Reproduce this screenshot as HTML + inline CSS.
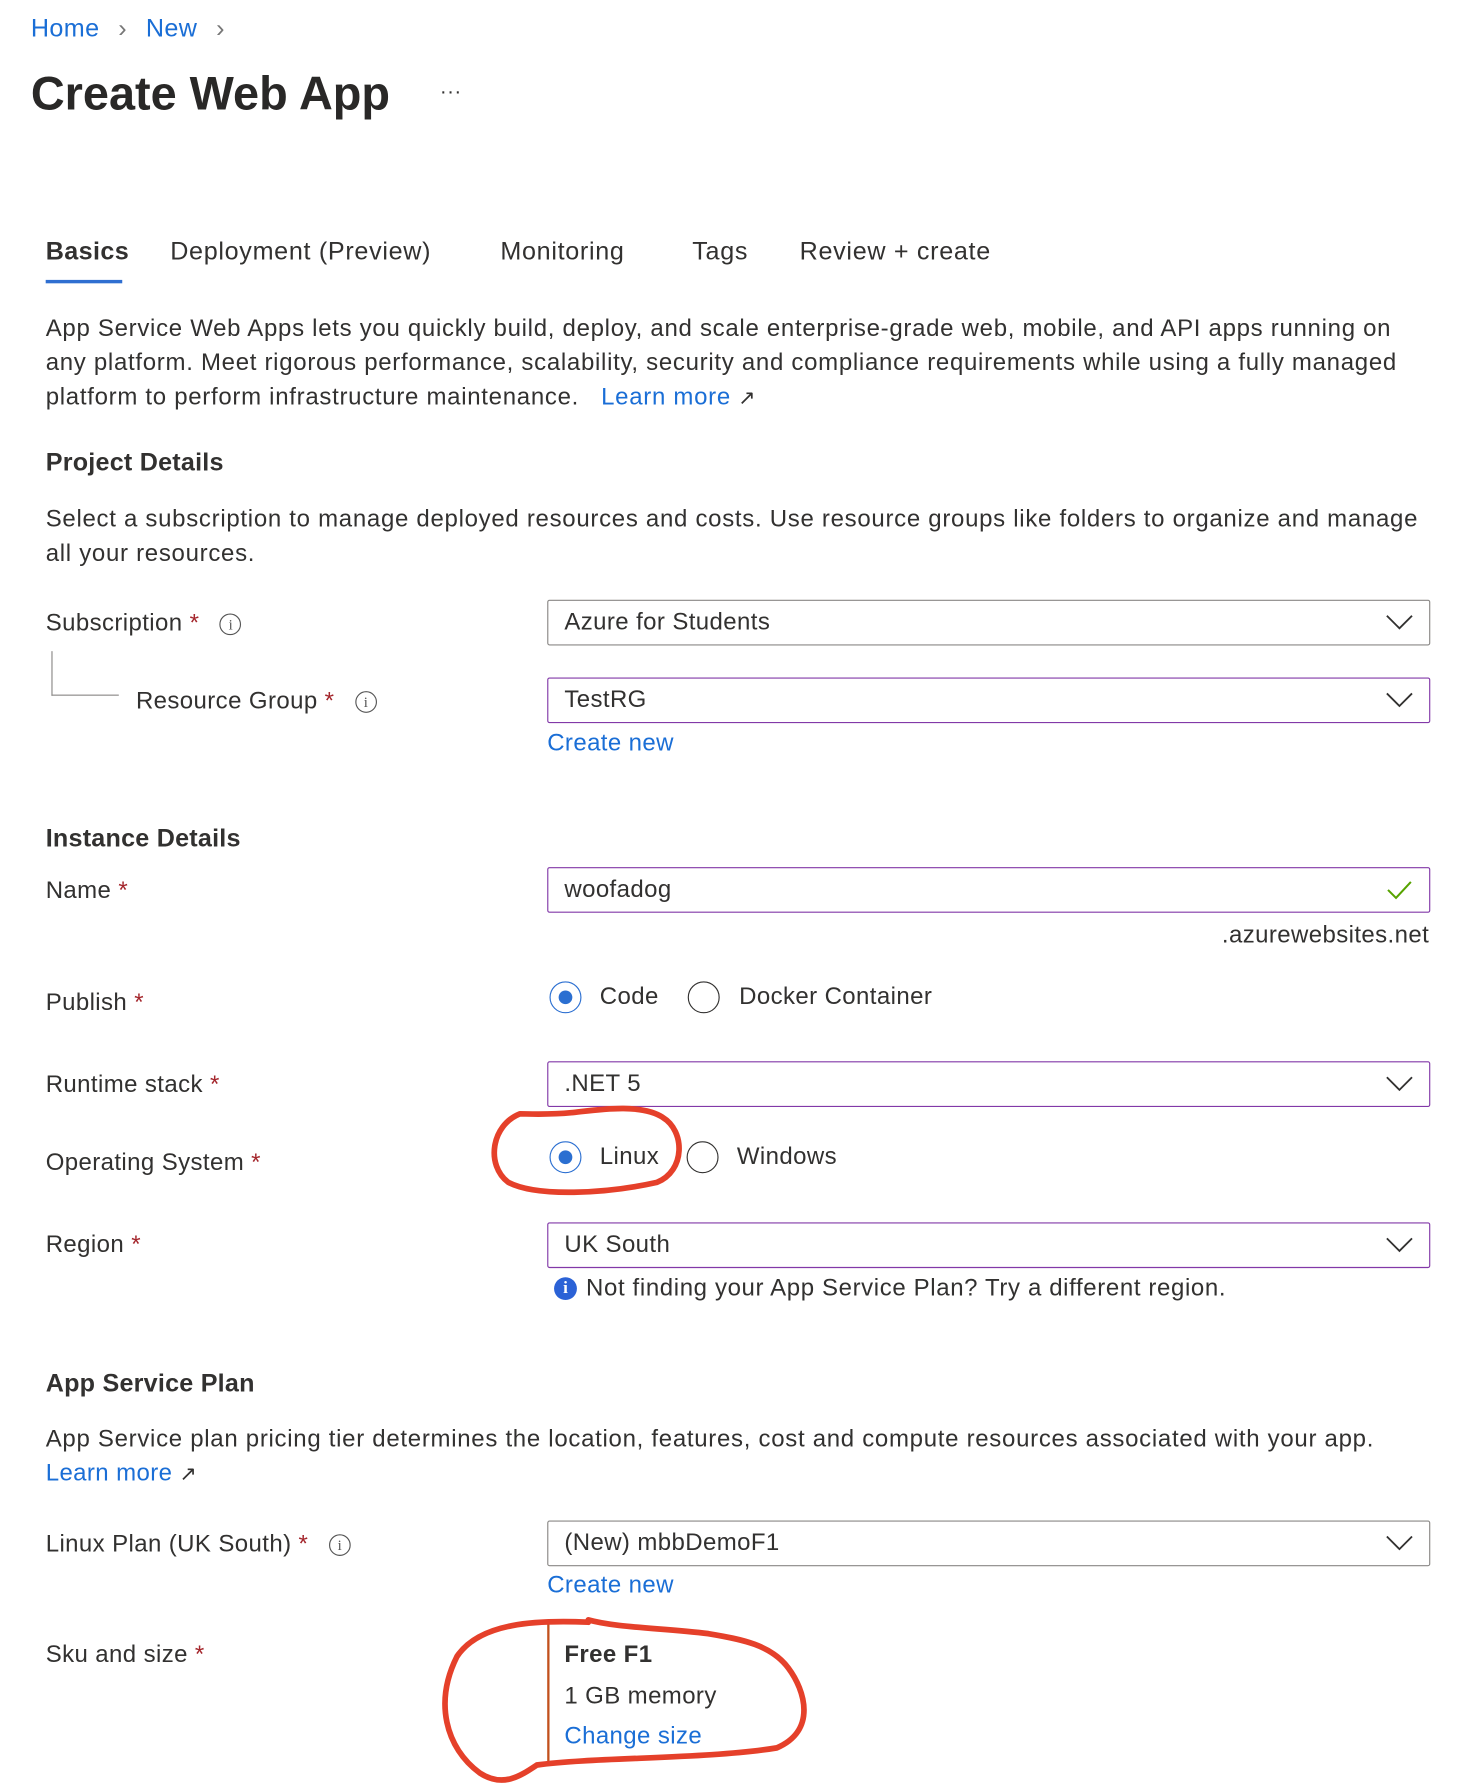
<!DOCTYPE html>
<html><head><meta charset="utf-8"><style>
html,body{margin:0;padding:0;background:#fff;}
body{width:1472px;height:1790px;overflow:hidden;position:relative;}
#w{position:absolute;left:0;top:0;width:1289px;height:1567px;transform:scale(1.1424);transform-origin:0 0;font-family:"Liberation Sans",sans-serif;color:#323130;}
.t{position:absolute;white-space:nowrap;font-size:21px;line-height:30px;transform:translateY(-15px);letter-spacing:0.35px;}
.b{font-weight:bold;font-size:22px;letter-spacing:0.2px;}
.l{color:#1a6ed6;}
.s{color:#a4262c;}
.box{position:absolute;left:479px;width:771px;height:38px;border:1px solid #8a8886;border-radius:2px;box-sizing:content-box;}
.p{border-color:#8239a8;border-width:1.5px;}
.box span{position:absolute;left:14px;top:4px;font-size:21px;line-height:30px;letter-spacing:0.35px;}
.box svg{position:absolute;right:14px;top:12px;}
.r{position:absolute;width:28px;height:28px;border:1.5px solid #323130;border-radius:50%;box-sizing:border-box;transform:translate(-14px,-14px);}
.r.on{border-color:#2b6fd1;}
.r.on::after{content:"";position:absolute;left:6.5px;top:6.5px;width:12px;height:12px;border-radius:50%;background:#2b6fd1;}
.info{display:inline-block;width:17px;height:17px;border:1.2px solid #555;border-radius:50%;font-size:13px;line-height:17px;text-align:center;font-family:"Liberation Serif",serif;vertical-align:middle;margin-left:18px;color:#555;letter-spacing:0;}
.p1{letter-spacing:0.62px;}
</style></head><body><div id="w">
<div class="t l" style="left:27px;top:25px;font-size:22px">Home <span style="color:#777;margin:0 10px">&#x203A;</span> New <span style="color:#777;margin-left:10px">&#x203A;</span></div>
<div class="t" style="left:27px;top:82px;font-size:41px;font-weight:bold;line-height:30px;color:#292827;letter-spacing:0">Create Web App</div>
<div class="t" style="left:385px;top:80px;font-size:18px">&middot;&middot;&middot;</div>

<div class="t" style="left:40px;top:220px;font-size:22px;font-weight:bold">Basics</div>
<div class="t" style="left:149px;top:220px;font-size:22px;letter-spacing:0.6px">Deployment (Preview)</div>
<div class="t" style="left:438px;top:220px;font-size:22px;letter-spacing:0.6px">Monitoring</div>
<div class="t" style="left:606px;top:220px;font-size:22px;letter-spacing:0.6px">Tags</div>
<div class="t" style="left:700px;top:220px;font-size:22px;letter-spacing:0.6px">Review + create</div>
<div style="position:absolute;left:40px;top:245px;width:67px;height:3px;background:#2f6fd1"></div>

<div class="t p1" style="left:40px;top:288px">App Service Web Apps lets you quickly build, deploy, and scale enterprise-grade web, mobile, and API apps running on</div>
<div class="t p1" style="left:40px;top:318px">any platform. Meet rigorous performance, scalability, security and compliance requirements while using a fully managed</div>
<div class="t p1" style="left:40px;top:348px">platform to perform infrastructure maintenance.&nbsp;&nbsp; <span class="l">Learn more</span> <span style="font-size:18px">&#x2197;&#xFE0E;</span></div>

<div class="t b" style="left:40px;top:405px">Project Details</div>
<div class="t p1" style="left:40px;top:455px">Select a subscription to manage deployed resources and costs. Use resource groups like folders to organize and manage</div>
<div class="t p1" style="left:40px;top:485px">all your resources.</div>

<div class="t" style="left:40px;top:546px">Subscription <span class="s">*</span><span class="info">i</span></div>
<div class="box" style="top:525px"><span>Azure for Students</span><svg width="24" height="14"><path d="M1 1 L12 12 L23 1" fill="none" stroke="#323130" stroke-width="1.6"/></svg></div>
<div style="position:absolute;left:45px;top:570px;width:58px;height:38px;border-left:1px solid #8a8886;border-bottom:1px solid #8a8886"></div>
<div class="t" style="left:119px;top:614px">Resource Group <span class="s">*</span><span class="info">i</span></div>
<div class="box p" style="top:593px"><span>TestRG</span><svg width="24" height="14"><path d="M1 1 L12 12 L23 1" fill="none" stroke="#323130" stroke-width="1.6"/></svg></div>
<div class="t l" style="left:479px;top:651px">Create new</div>

<div class="t b" style="left:40px;top:734px">Instance Details</div>
<div class="t" style="left:40px;top:780px">Name <span class="s">*</span></div>
<div class="box p" style="top:759px"><span>woofadog</span><svg width="24" height="18" style="top:10px"><path d="M2 9 L9 16 L22 2" fill="none" stroke="#57a300" stroke-width="1.8"/></svg></div>
<div class="t" style="right:38px;top:819px">.azurewebsites.net</div>

<div class="t" style="left:40px;top:878px">Publish <span class="s">*</span></div>
<div class="r on" style="left:495px;top:873px"></div>
<div class="t" style="left:525px;top:873px">Code</div>
<div class="r" style="left:616px;top:873px"></div>
<div class="t" style="left:647px;top:873px">Docker Container</div>

<div class="t" style="left:40px;top:950px">Runtime stack <span class="s">*</span></div>
<div class="box p" style="top:929px"><span>.NET 5</span><svg width="24" height="14"><path d="M1 1 L12 12 L23 1" fill="none" stroke="#323130" stroke-width="1.6"/></svg></div>

<div class="t" style="left:40px;top:1018px">Operating System <span class="s">*</span></div>
<div class="r on" style="left:495px;top:1013px"></div>
<div class="t" style="left:525px;top:1013px">Linux</div>
<div class="r" style="left:615px;top:1013px"></div>
<div class="t" style="left:645px;top:1013px">Windows</div>

<div class="t" style="left:40px;top:1090px">Region <span class="s">*</span></div>
<div class="box p" style="top:1070px"><span>UK South</span><svg width="24" height="14"><path d="M1 1 L12 12 L23 1" fill="none" stroke="#323130" stroke-width="1.6"/></svg></div>
<div style="position:absolute;left:485px;top:1118px;width:20px;height:20px;border-radius:50%;background:#2b62d6;color:#fff;font-size:15px;font-weight:bold;text-align:center;line-height:21px;font-family:'Liberation Serif',serif">i</div>
<div class="t" style="left:513px;top:1128px;letter-spacing:0.55px">Not finding your App Service Plan? Try a different region.</div>

<div class="t b" style="left:40px;top:1211px">App Service Plan</div>
<div class="t p1" style="left:40px;top:1260px">App Service plan pricing tier determines the location, features, cost and compute resources associated with your app.</div>
<div class="t" style="left:40px;top:1290px"><span class="l">Learn more</span> <span style="font-size:18px">&#x2197;&#xFE0E;</span></div>

<div class="t" style="left:40px;top:1352px">Linux Plan (UK South) <span class="s">*</span><span class="info">i</span></div>
<div class="box" style="top:1331px"><span>(New) mbbDemoF1</span><svg width="24" height="14"><path d="M1 1 L12 12 L23 1" fill="none" stroke="#323130" stroke-width="1.6"/></svg></div>
<div class="t l" style="left:479px;top:1388px">Create new</div>

<div class="t" style="left:40px;top:1449px">Sku and size <span class="s">*</span></div>
<div style="position:absolute;left:479px;top:1420px;width:2px;height:122px;background:#c2501c"></div>
<div class="t" style="left:494px;top:1449px;font-weight:bold">Free F1</div>
<div class="t" style="left:494px;top:1485px">1 GB memory</div>
<div class="t l" style="left:494px;top:1520px">Change size</div>

<svg style="position:absolute;left:0;top:0" width="1289" height="1567">
<path d="M455 975 C430 985 425 1020 445 1035 C470 1048 530 1045 575 1035 C600 1025 600 990 580 978 C560 965 520 972 500 974 C480 976 462 975 455 975" fill="none" stroke="#e5402a" stroke-width="5" stroke-linecap="round"/>
<path d="M515 1420 C470 1418 420 1420 400 1450 C380 1490 390 1530 420 1552 C440 1565 455 1555 470 1545 C520 1538 620 1540 680 1530 C715 1515 705 1480 690 1460 C675 1440 650 1435 620 1430 C580 1425 540 1425 515 1418" fill="none" stroke="#e5402a" stroke-width="5" stroke-linecap="round"/>
</svg>
</div></body></html>
